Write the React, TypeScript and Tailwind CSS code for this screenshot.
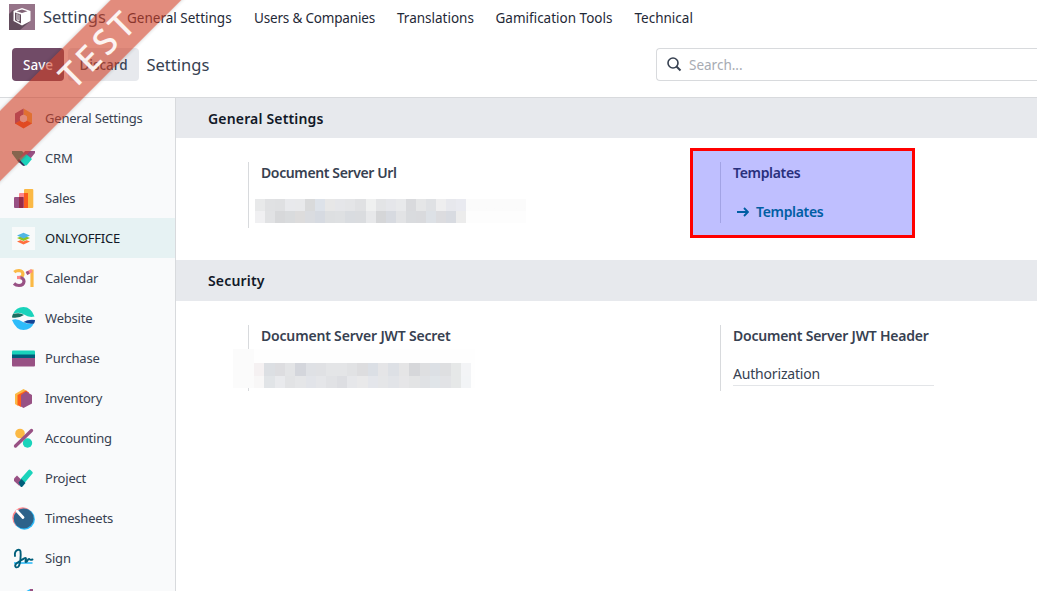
import type { ReactNode } from "react";

const apps: { name: string; icon: ReactNode; active?: boolean }[] = [
  {
    name: "General Settings",
    icon: (
      <>
        <path d="M11.500 1.500 20 6.500V17l-5.300-3V9.500l-3.200-1.900z" fill="#fbb945" />
        <path d="M11.500 1.500 3 6.500V17l5.300-3V9.500l3.200-1.900z" fill="#985184" />
        <path d="M3 16.500 11.500 21.500 20 16.500 14.700 13.500l-3.200 2-3.200-2z" fill="#fc5b1c" />
        <circle cx="11.500" cy="11.500" r="3.600" fill="#f9fafb" />
      </>
    ),
  },
  {
    name: "CRM",
    icon: (
      <>
        <path d="M0 4h10l5 5-8 7L0 6.500z" fill="#1a9f8a" />
        <path d="M23 4H13L7 12l7 5 9-11z" fill="#985184" />
        <path d="m7 12 5 6q1.500 1 3 0l5-6-6-5z" fill="#1ad3bb" />
        <path d="m7 12-1.500 1.500L10 18q2 1.500 3 .5z" fill="#31325c" />
      </>
    ),
  },
  {
    name: "Sales",
    icon: (
      <>
        <rect x="12" y="2" width="9.300" height="19" rx="1" fill="#fbb945" />
        <rect x="7" y="6" width="9" height="15" rx="1" fill="#fc868b" />
        <path d="M12 6h4v15h-4z" fill="#fc5b1c" />
        <rect x="2" y="10" width="9.500" height="11" rx="1" fill="#985184" />
        <path d="M7 10h4.500v11H7z" fill="#962b48" />
      </>
    ),
  },
  {
    name: "ONLYOFFICE",
    active: true,
    icon: (
      <>
        <path d="M0 0h23v23H0z" fill="#f8fafa" />
        <path d="m5 14.500 6.500-2.500 6.500 2.500-6.500 3z" fill="#ff6f3d" />
        <path d="m5 11.500 6.500-2.500 6.500 2.500-6.500 3z" fill="#f8fafa" />
        <path d="m5 11 6.500-2.500L18 11l-6.500 3z" fill="#8fc31f" />
        <path d="m5 8.500 6.500-2.800L18 8.500l-6.500 3z" fill="#4fb6e4" />
      </>
    ),
  },
  {
    name: "Calendar",
    icon: (
      <g fill="none" strokeWidth="3.200">
        <path d="M2.300 5.200Q4 3.500 7 3.500q3.800.3 4 3.500-.2 3-3.500 3.500" stroke="#fbb945" />
        <path d="M7.500 10.500q4.500.5 4.500 4-.5 4-5 4-3 0-5-2" stroke="#985184" />
        <path d="M5 10.500h3.500" stroke="#fc868b" />
        <path d="M20 2.500V20" stroke="#fbb945" />
        <path d="m14.500 6.500 5.500-3" stroke="#fc868b" />
        <path d="m14.500 6.500 2.500-1.400" stroke="#985184" />
      </g>
    ),
  },
  {
    name: "Website",
    icon: (
      <>
        <path d="M1 7Q4 0 11.500 0T22.500 9.500Q17 11 12 7.500 7 4.500 1 7z" fill="#1ad3bb" />
        <path d="M1 7Q8 5 12 8q-5 3.500-12 2.500Q0 8.500 1 7z" fill="#1a6f62" />
        <path d="M0 13q5-2 11 2 5 3 11 1-3 7-10.500 7T0 13z" fill="#2ebcfa" />
        <path d="M11.500 15q5-3 11.500-2 0 2-1 3.500-5 1-10.500-1.500z" fill="#144496" />
      </>
    ),
  },
  {
    name: "Purchase",
    icon: (
      <>
        <path d="M0 9h23v9.500q0 1-1 1H1q-1 0-1-1z" fill="#985184" />
        <path d="M1 3.500h21q1 0 1 1V8H0V4.500q0-1 1-1z" fill="#1ad3bb" />
        <path d="M0 7.500h23V11H0z" fill="#005e7a" />
      </>
    ),
  },
  {
    name: "Inventory",
    icon: (
      <>
        <path d="M11.500 2 15 4 6 19l-3-2V7z" fill="#fbb945" />
        <path d="m14 3.500 3 2L9 20l-3.500-2V8z" fill="#fc5b1c" />
        <path d="m14 4.500 6 3.500v8.500L11.500 21 9 19.500V8z" fill="#985184" />
      </>
    ),
  },
  {
    name: "Accounting",
    icon: (
      <>
        <circle cx="8" cy="6.500" r="4.800" fill="#fbb945" />
        <circle cx="15.500" cy="16" r="4.700" fill="#1ad3bb" />
        <path d="M3.500 19 19.500 3.500" stroke="#985184" strokeWidth="3.300" strokeLinecap="round" />
      </>
    ),
  },
  {
    name: "Project",
    icon: (
      <>
        <path d="m2 11.500 3-3 5 5-2.500 5.500L2 14z" fill="#985184" />
        <path d="m8.500 12 8-9q1-1 2 0l2 2q.5 1 0 1.500L12.500 16z" fill="#1ad3bb" />
        <path d="m6.500 15.500 3-3.500 4 4-3 3.500q-1 1-2 0z" fill="#005e7a" />
      </>
    ),
  },
  {
    name: "Timesheets",
    icon: (
      <>
        <circle cx="10.800" cy="10.800" r="10.500" fill="#fc868b" />
        <circle cx="12.400" cy="12.200" r="10.500" fill="#2ebcfa" />
        <circle cx="11.700" cy="11.500" r="10" fill="#2d628a" />
        <path d="m5 4 6 6.500" stroke="#fff" strokeWidth="2.800" strokeLinecap="round" />
      </>
    ),
  },
  {
    name: "Sign",
    icon: (
      <>
        <path d="M2 16h18.500" stroke="#2ebcfa" strokeWidth="1.600" />
        <path
          d="M3 9C2 3 8 1 8.500 4.500 9 8 8.500 18 6 20c-3 1.500-4-2-1-4s7-5 8.500-5c1.500 0-1 4 .5 4s1.500-3 3-3 0 1.500 3.500 .5"
          fill="none"
          stroke="#005e7a"
          strokeWidth="1.900"
          strokeLinecap="round"
        />
      </>
    ),
  },
  {
    name: "",
    icon: (
      <>
        <path d="m11 6 7-4h2v6z" fill="#2ebcfa" />
        <path d="M18 2h3v5h-3z" fill="#985184" />
      </>
    ),
  },
];

const menus = [
  { label: "General Settings", cls: "w-[127px]" },
  { label: "Users & Companies", cls: "w-[143px] tracking-[-0.180px]" },
  { label: "Translations", cls: "w-[98.500px]" },
  { label: "Gamification Tools", cls: "w-[139px]" },
  { label: "Technical", cls: "w-[80px]" },
];

const urlTop = "#e8e9ea #e0e1e3 #dfe0e2 #e8e9ec #e8e9eb #d9dadb #dde2e9 #e7e7e7 #e5e6e9 #e4e5e7 #e0e1e3 #eff0f0 #e3e4e6 #e5e6ea #e8e9eb #d9dadd #e5e6e7 #dfe1e4 #eeeeef #e7e8ed #e9eaf0".split(" ");
const urlBottom = "#f0f0f2 #e1e2e4 #d7d8da #d9dbdd #dddcdc #dadce0 #d6dae1 #dddfe1 #dee0e2 #d9dce0 #dadcdf #e7e8ea #d5d6d8 #d7dae0 #e2e3e5 #d9dbde #d9dadd #dde1e6 #dcdcdf #d8dbe1 #ececec".split(" ");
const keyTop = "#f5f1f2 #dcdfe3 #dddde0 #e3e4e6 #d4d6dc #dfe1e5 #e0e1e4 #e4e5e7 #e4e5e7 #e1e2e4 #dddddf #dbdfe5 #e5e5e7 #dde0e5 #e5e5e6 #d6d7da #dedfe1 #dce0e5 #dedfe1 #e6e8e8 #f3f4f6".split(" ");
const keyBottom = "#f8f7f7 #e1e4e7 #e9eaed #e2e3e5 #e5e6e8 #e2e4e9 #e5e6e9 #e1e2e5 #dddee2 #e6e7ea #e9e9ea #e4e6eb #e5e6e8 #e2e4e8 #e6e6e8 #e3e4e5 #e0e2e5 #e0e5e9 #e2e3e6 #e6e8e8 #f2f4f6".split(" ");

function Mosaic({ rows, cell }: { rows: string[][]; cell: string }) {
  return (
    <div className="flex flex-col">
      {rows.map((row, r) => (
        <div key={r} className="flex">
          {row.map((color, i) => (
            <span key={i} className={cell} style={{ backgroundColor: color }} />
          ))}
        </div>
      ))}
    </div>
  );
}

function SectionTitle({ children, cls }: { children: ReactNode; cls: string }) {
  return (
    <h2 className={`flex shrink-0 items-center bg-[#e7e9ed] pl-8 text-[14px] font-semibold tracking-[0.170px] text-[#111827] ${cls}`}>
      {children}
    </h2>
  );
}

export default function App() {
  return (
    <div className="relative flex h-[591px] w-[1037px] flex-col overflow-hidden bg-white font-['Noto_Sans',sans-serif] text-[14px] text-[#374151]">
      <header className="flex h-[34px] shrink-0 items-center pl-[9px]">
        <svg className="mr-2 size-[26px]" viewBox="0 0 26 26">
          <path d="M0 0h26v26H0z" fill="#967489" />
          <path d="M4 6 0 10v16h11l10.500-9z" fill="#624c5c" />
          <path d="m13 4 8.500 3v10L13 21.500 4.500 17V7z" fill="#fff" />
          <path d="m6 8.500 6 2v9l-6-3.200z" fill="#624c5c" />
          <path d="M8 9.500v6.500l2 1v-6.500" stroke="#fff" strokeWidth=".9" fill="none" />
          <path d="M7.500 7.200 13 5.500l5.500 1.700L13 8.900z" fill="#806376" />
        </svg>
        <span className="w-[84px] pt-px text-[16.500px]">Settings</span>
        <nav className="flex pt-0.5 text-[13.500px] whitespace-nowrap text-[#1f2937]">
          {menus.map((m) => (
            <a key={m.label} className={m.cls}>{m.label}</a>
          ))}
        </nav>
      </header>

      <div className="flex h-16 shrink-0 items-center border-b border-[#d8dadd] pb-0.5 pl-3">
        <button className="h-[33px] w-[52px] rounded-[4px] bg-[#714b67] pt-px text-[13.500px] font-medium text-white">Save</button>
        <button className="ml-1 h-[33px] w-[71px] rounded-[4px] bg-[#e7e9ed] pt-px text-[13.500px] font-medium">Discard</button>
        <span className="ml-[7.500px] w-[509.500px] pt-px text-[16.500px]">Settings</span>
        <div className="flex h-[33px] flex-1 items-center rounded-l-[4px] border border-r-0 border-[#d8dadd] pl-2.5">
          <svg className="mr-[7px] size-[15px]" viewBox="0 0 15 15" fill="none" stroke="#374151">
            <circle cx="6" cy="6" r="5" strokeWidth="1.600" />
            <path d="m9.500 9.500 4 4" strokeWidth="2" />
          </svg>
          <span className="pt-px text-[13.500px] text-[#a7abb3]">Search...</span>
        </div>
      </div>

      <div className="flex min-h-0 flex-1">
        <aside className="flex w-44 shrink-0 flex-col overflow-hidden border-r border-[#d8dadd] bg-[#f9fafb]">
          {apps.map((app) => (
            <div
              key={app.name}
              className={
                app.active
                  ? "flex h-10 shrink-0 items-center gap-2.5 bg-[#e6f2f3] pl-3 text-[13px] tracking-[-0.200px] text-[#111827]"
                  : "flex h-10 shrink-0 items-center gap-2.5 pl-3 text-[13px] tracking-[-0.200px]"
              }
            >
              <svg className="size-[23px]" viewBox="0 0 23 23">{app.icon}</svg>
              <span className="pt-0.5">{app.name}</span>
            </div>
          ))}
        </aside>

        <main className="flex flex-1 flex-col">
          <SectionTitle cls="h-10">General Settings</SectionTitle>
          <div className="flex h-[122px] shrink-0 pt-6 pl-[72px]">
            <div className="h-[66px] w-[472px] border-l border-[#d8dadd] pl-1.5">
              <h3 className="pl-1.5 text-[14px] leading-[22px] font-semibold tracking-[-0.380px]">Document Server Url</h3>
              <div className="mt-[15px] flex">
                <Mosaic rows={[urlTop, urlBottom]} cell="h-3 w-[10.050px]" />
                <div className="h-6 w-[60px] bg-gradient-to-b from-[#fbfbfb] from-50% to-[#fdfdfd] to-50%" />
              </div>
            </div>
            <div className="h-[61px] border-l border-[#d8dadd] pl-3">
              <h3 className="text-[14px] leading-[22px] font-semibold tracking-[-0.330px]">Templates</h3>
              <a className="mt-[17px] flex items-center gap-[7px] pl-1 leading-[22px] font-semibold tracking-[-0.330px] text-[#017e84]">
                <svg className="size-3" viewBox="0 0 12 12" fill="none" stroke="currentColor" strokeWidth="1.900">
                  <path d="M0 6h11M7 2l4 4-4 4" />
                </svg>
                Templates
              </a>
            </div>
          </div>

          <SectionTitle cls="h-[41px]">Security</SectionTitle>
          <div className="flex pt-6 pl-[72px]">
            <div className="h-[66px] w-[472px] border-l border-[#d8dadd]">
              <h3 className="pl-3 text-[14px] leading-[22px] font-semibold tracking-[-0.180px]">Document Server JWT Secret</h3>
              <div className="relative -ml-4 mt-[2px] flex w-[243px]">
                <div className="h-[39px] w-[21px] bg-[#fbfbfb]" />
                <div className="bg-[#fefefe] pt-[14px] pr-1">
                  <Mosaic rows={[keyTop, keyBottom]} cell="h-[12.500px] w-[10.350px]" />
                </div>
              </div>
            </div>
            <div className="h-[66px] border-l border-[#d8dadd] pl-3">
              <h3 className="text-[14px] leading-[22px] font-semibold tracking-[-0.230px]">Document Server JWT Header</h3>
              <div className="mt-[14px] h-[25px] w-[201px] border-b border-[#e3e5e8] leading-[25px] tracking-[-0.180px]">Authorization</div>
            </div>
          </div>
        </main>
      </div>

      <div className="absolute top-[148px] left-[690px] h-[90px] w-[225px] border-[3px] border-[#ff0000] bg-[#0000ff]/25" />
      <div className="absolute top-[48px] left-[-77px] flex h-[50px] w-[300px] -rotate-45 items-center justify-center bg-[#cf3f26]/60 text-[35px] shadow-[0_0_4px_rgba(0,0,0,0.2)]">
        <span className="pl-[70px] font-medium tracking-[4px] text-white/90">TEST</span>
      </div>
    </div>
  );
}
